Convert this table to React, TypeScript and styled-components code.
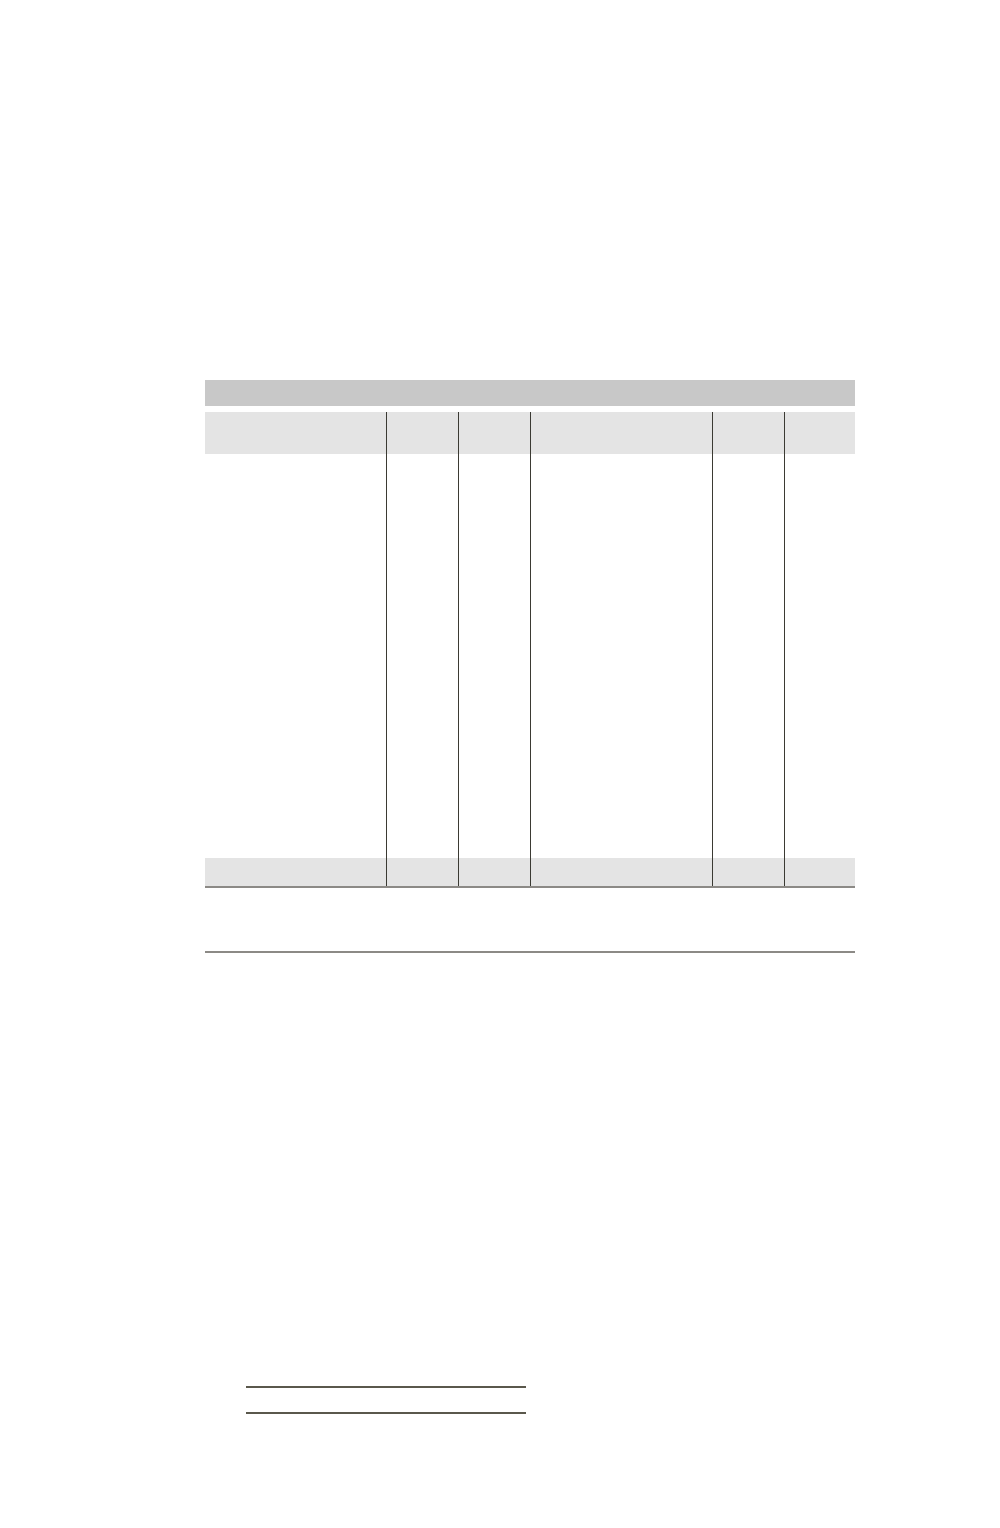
import React from "react";
import styled, { createGlobalStyle } from "styled-components";

const COLUMNS = [181, 72, 72, 182, 72, 71];

const GlobalStyle = createGlobalStyle`
  html, body {
    margin: 0;
    padding: 0;
    background: #ffffff;
    font-family: "Liberation Sans", Arial, sans-serif;
  }
`;

const Page = styled.div`
  min-height: 1528px;
  padding: 380px 0 0 205px;
  box-sizing: border-box;
`;

const Sheet = styled.div`
  width: 650px;
  display: flex;
  flex-direction: column;
`;

const TitleBar = styled.div`
  height: 26px;
  background: #c8c8c8;
`;

const Grid = styled.div`
  margin-top: 6px;
  display: grid;
  grid-template-columns: ${COLUMNS.map((w) => `${w}px`).join(" ")};
  border-bottom: 2px solid #8c8a86;
`;

const Cell = styled.div<{ $height: number; $shaded?: boolean; $first?: boolean }>`
  height: ${(p) => p.$height}px;
  background: ${(p) => (p.$shaded ? "#e4e4e4" : "transparent")};
  border-left: ${(p) => (p.$first ? "none" : "1px solid #3b3a33")};
`;

const NoteRow = styled.div`
  height: 63px;
  border-bottom: 2px solid #8c8a86;
`;

const Signatures = styled.div`
  margin: 433px 0 0 41px;
  width: 280px;
  display: flex;
  flex-direction: column;
  gap: 24px;
`;

const SignLine = styled.div`
  border-top: 2px solid #5a584c;
`;

const Row: React.FC<{ height: number; shaded?: boolean }> = ({ height, shaded }) => (
  <>
    {COLUMNS.map((_, i) => (
      <Cell key={i} $height={height} $shaded={shaded} $first={i === 0} />
    ))}
  </>
);

const App: React.FC = () => (
  <>
    <GlobalStyle />
    <Page>
      <Sheet>
        <TitleBar />
        <Grid>
          <Row height={42} shaded />
          <Row height={404} />
          <Row height={28} shaded />
        </Grid>
        <NoteRow />
      </Sheet>
      <Signatures>
        <SignLine />
        <SignLine />
      </Signatures>
    </Page>
  </>
);

export default App;
